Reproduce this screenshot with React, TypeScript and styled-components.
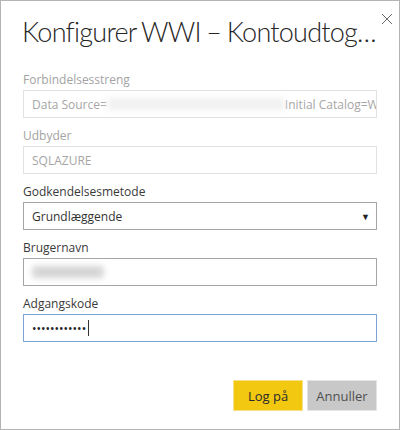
import styled, { createGlobalStyle } from "styled-components";

const GlobalStyle = createGlobalStyle`
  html, body {
    margin: 0;
    padding: 0;
    background: #ffffff;
  }
  body {
    font-family: "Open Sans", "Noto Sans", "Liberation Sans", sans-serif;
  }
`;

const Dialog = styled.div`
  box-sizing: border-box;
  width: 400px;
  height: 430px;
  border: 1px solid #b4b4b4;
  background: #ffffff;
  position: relative;
  overflow: hidden;
  padding: 0 22px;
  display: flex;
  flex-direction: column;
`;

const CloseButton = styled.button`
  position: absolute;
  top: 12px;
  right: 6px;
  width: 12px;
  height: 12px;
  padding: 0;
  border: none;
  background: transparent;
  display: flex;
  cursor: pointer;
`;

const Title = styled.h1`
  margin: 13px 0 0 -1px;
  font-family: Lato, "Open Sans", sans-serif;
  font-size: 27px;
  font-weight: 300;
  line-height: 36px;
  letter-spacing: -0.75px;
  word-spacing: -1px;
  color: #262626;
  white-space: nowrap;
`;

const Form = styled.div`
  display: flex;
  flex-direction: column;
  margin-top: 22px;
`;

const Field = styled.div`
  display: flex;
  flex-direction: column;
  margin-bottom: 10px;
`;

const Label = styled.label<{ $disabled?: boolean }>`
  font-size: 12px;
  line-height: 16px;
  margin-bottom: 2px;
  color: ${(p) => (p.$disabled ? "#a3a3a3" : "#3a3a3a")};
`;

const Box = styled.div<{ $tone?: "disabled" | "normal" | "focus" }>`
  box-sizing: border-box;
  height: 28px;
  width: 354px;
  padding: 0 8px;
  display: flex;
  align-items: center;
  overflow: hidden;
  white-space: nowrap;
  font-size: 12px;
  background: #ffffff;
  border: 1px solid
    ${(p) =>
      p.$tone === "disabled"
        ? "#e1e1e1"
        : p.$tone === "focus"
        ? "#7aa3d6"
        : "#a6a6a6"};
  color: ${(p) => (p.$tone === "disabled" ? "#a6a6a6" : "#333333")};
`;

const Blur = styled.span<{ $w: number; $shade: string }>`
  display: inline-block;
  flex: none;
  height: 12px;
  width: ${(p) => p.$w}px;
  background: ${(p) => p.$shade};
  filter: blur(3px);
  border-radius: 4px;
`;

const SelectBox = styled(Box)`
  justify-content: space-between;
  padding-right: 6px;
`;

const Arrow = styled.span`
  font-size: 9px;
  color: #222;
  margin-top: 1px;
`;

const Dots = styled.span`
  font-size: 12px;
  color: #222;
`;

const Caret = styled.span`
  display: inline-block;
  width: 1px;
  height: 16px;
  background: #333;
  margin-left: 2px;
`;

const Footer = styled.div`
  display: flex;
  justify-content: flex-end;
  gap: 4px;
  margin-top: 28px;
`;

const Button = styled.button<{ $primary?: boolean }>`
  box-sizing: border-box;
  width: 70px;
  height: 31px;
  border: 1px solid ${(p) => (p.$primary ? "#f7e08a" : "#e4e4e4")};
  background: ${(p) => (p.$primary ? "#f2c811" : "#c8c8c8")};
  color: ${(p) => (p.$primary ? "#2a2a2a" : "#505050")};
  font-family: inherit;
  font-size: 13px;
  padding: 0;
  cursor: pointer;
`;

const App = () => {
  return (
    <>
      <GlobalStyle />
      <Dialog>
        <CloseButton aria-label="Luk">
          <svg width="12" height="12" viewBox="0 0 12 12">
            <path d="M1 1 L11 11 M11 1 L1 11" stroke="#6a6a6a" strokeWidth="1" fill="none" />
          </svg>
        </CloseButton>
        <Title>Konfigurer WWI – Kontoudtog…</Title>
        <Form>
          <Field>
            <Label $disabled>Forbindelsesstreng</Label>
            <Box $tone="disabled">
              Data Source=
              <Blur $w={178} $shade="#f1f1f1" />
              Initial Catalog=WideWorldImporters
            </Box>
          </Field>
          <Field>
            <Label $disabled>Udbyder</Label>
            <Box $tone="disabled">SQLAZURE</Box>
          </Field>
          <Field>
            <Label>Godkendelsesmetode</Label>
            <SelectBox>
              Grundlæggende
              <Arrow>▼</Arrow>
            </SelectBox>
          </Field>
          <Field>
            <Label>Brugernavn</Label>
            <Box>
              <Blur $w={72} $shade="#d4d4d4" />
            </Box>
          </Field>
          <Field>
            <Label>Adgangskode</Label>
            <Box $tone="focus">
              <Dots>••••••••••••</Dots>
              <Caret />
            </Box>
          </Field>
        </Form>
        <Footer>
          <Button $primary>Log på</Button>
          <Button>Annuller</Button>
        </Footer>
      </Dialog>
    </>
  );
};

export default App;
